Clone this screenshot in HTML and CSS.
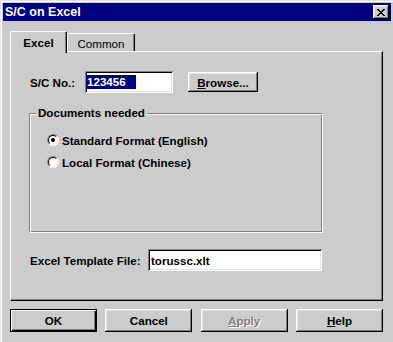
FILE: index.html
```html
<!DOCTYPE html>
<html lang="en">
<head>
    <meta charset="UTF-8">
    <title>S/C on Excel</title>
    <link rel="stylesheet" href="styles.css">
</head>
<body>
    <div class="window">
        <div class="titlebar">
            <span class="title">S/C on Excel</span>
            <button class="close-btn">
                <svg width="8" height="7" viewBox="0 0 8 7" shape-rendering="crispEdges">
                    <path d="M0 0h2v1h-2zM6 0h2v1h-2zM1 1h2v1h-2zM5 1h2v1h-2zM2 2h4v1h-4zM3 3h2v1h-2zM2 4h4v1h-4zM1 5h2v1h-2zM5 5h2v1h-2zM0 6h2v1h-2zM6 6h2v1h-2z" fill="#000"/>
                </svg>
            </button>
        </div>

        <div class="content">
            <div class="tabs">
                <div class="tab active">Excel</div>
                <div class="tab">Common</div>
            </div>

            <div class="tab-panel">
                <div class="sc-row">
                    <label class="sc-label">S/C No.:</label>
                    <div class="textbox sc-input"><span class="selected">123456</span></div>
                    <button class="btn browse-btn"><u>B</u>rowse...</button>
                </div>

                <fieldset class="group">
                    <legend>Documents needed</legend>
                    <div class="radio-row"><span class="radio checked"></span>Standard Format (English)</div>
                    <div class="radio-row"><span class="radio"></span>Local Format (Chinese)</div>
                </fieldset>

                <div class="template-row">
                    <label class="template-label">Excel Template File:</label>
                    <div class="textbox template-input">torussc.xlt</div>
                </div>
            </div>

            <div class="button-row">
                <button class="btn dlg-btn default">OK</button>
                <button class="btn dlg-btn">Cancel</button>
                <button class="btn dlg-btn disabled"><u>A</u>pply</button>
                <button class="btn dlg-btn"><u>H</u>elp</button>
            </div>
        </div>
    </div>
</body>
</html>
```

FILE: styles.css
```css
* {
    margin: 0;
    padding: 0;
    box-sizing: border-box;
    font-family: "Liberation Sans", Arial, sans-serif;
}

body {
    width: 393px;
    height: 342px;
    overflow: hidden;
    background-color: #cccccc;
    font-size: 11.6px;
    font-weight: bold;
    color: #000;
}

.window {
    width: 393px;
    height: 342px;
    padding: 3px 2px 2px 3px;
    background-color: #cccccc;
    box-shadow: inset 1px 1px #e3e3e3, inset 2px 2px #fff;
}

.titlebar {
    height: 18px;
    background-color: #000080;
    color: #fff;
    display: flex;
    align-items: center;
    justify-content: space-between;
    padding: 0 2px 0 2px;
}

.title {
    font-size: 12.5px;
    font-weight: bold;
}

.close-btn {
    width: 16px;
    height: 14px;
    border: none;
    background-color: #cccccc;
    display: flex;
    align-items: center;
    justify-content: center;
    box-shadow: inset -1px -1px #000, inset 1px 1px #fff, inset -2px -2px #808080, inset 2px 2px #e3e3e3;
}

.content {
    padding: 10px 0 0 7px;
}

/* tabs */
.tabs {
    display: flex;
    align-items: flex-end;
    height: 20px;
}

.tab {
    height: 18px;
    width: 68px;
    padding-top: 3px;
    line-height: 14px;
    text-align: center;
    font-weight: normal;
    background-color: #cccccc;
    border-top: 1px solid #fff;
    border-left: 1px solid #fff;
    border-right: 1px solid #000;
    border-radius: 2px 2px 0 0;
    box-shadow: inset -1px 0 #808080;
}

.tab.active {
    width: 57px;
    height: 22px;
    padding-top: 4px;
    margin-bottom: -2px;
    position: relative;
    z-index: 1;
    font-weight: bold;
}

.tab-panel {
    width: 373px;
    height: 250px;
    padding: 19px 0 0 19px;
    border-top: 1px solid #fff;
    border-left: 1px solid #fff;
    border-right: 1px solid #000;
    border-bottom: 1px solid #000;
    box-shadow: inset -1px -1px #808080;
}

/* fields */
.sc-row,
.template-row {
    display: flex;
    align-items: center;
    height: 22px;
}

.sc-label {
    width: 55px;
}

.template-row {
    margin-top: 16px;
}

.template-label {
    width: 118px;
}

.textbox {
    height: 22px;
    background-color: #fff;
    display: flex;
    align-items: center;
    padding: 0 2px 0 3px;
    box-shadow: inset 1px 1px #808080, inset -1px -1px #fff, inset 2px 2px #000, inset -2px -2px #e3e3e3;
}

.sc-input {
    width: 88px;
    margin-right: 15px;
    padding-left: 1px;
}

.template-input {
    width: 174px;
}

.selected {
    background-color: #000080;
    color: #fff;
    line-height: 14px;
    padding: 0 10px 0 1px;
}

/* buttons */
.btn {
    border: none;
    background-color: #cccccc;
    font-size: 11.6px;
    font-weight: bold;
    color: #000;
    box-shadow: inset -1px -1px #000, inset 1px 1px #fff, inset -2px -2px #808080, inset 2px 2px #e3e3e3;
}

.browse-btn {
    width: 70px;
    height: 20px;
}

.button-row {
    width: 373px;
    margin-top: 8px;
    display: flex;
    justify-content: space-between;
}

.dlg-btn {
    width: 87px;
    height: 23px;
}

.dlg-btn.default {
    box-shadow: inset 0 0 0 1px #000, inset 2px 2px #fff, inset -2px -2px #000, inset -3px -3px #808080;
}

.dlg-btn.disabled {
    color: #808080;
    text-shadow: 1px 1px #fff;
}

/* group box */
.group {
    width: 294px;
    height: 127px;
    margin: 13px 0 0 -1px;
    padding: 12px 0 0 0;
    border: 1px solid;
    border-color: #808080 #fff #fff #808080;
    box-shadow: inset 1px 1px #fff, inset -1px -1px #808080;
}

.group legend {
    margin-left: 6px;
    padding: 0 2px;
    line-height: 14px;
    background-color: #cccccc;
}

.radio-row {
    display: flex;
    align-items: center;
    height: 16px;
    margin-left: 17px;
    margin-bottom: 6px;
}

.radio {
    width: 12px;
    height: 12px;
    margin-right: 3px;
    border-radius: 50%;
    border: 1px solid;
    border-color: #808080 #fff #fff #808080;
    background-color: #fff;
    position: relative;
}

.radio::before {
    content: "";
    position: absolute;
    inset: 0;
    border-radius: 50%;
    border: 1px solid;
    border-color: #000 #e3e3e3 #e3e3e3 #000;
}

.radio.checked::after {
    content: "";
    position: absolute;
    left: 3px;
    top: 3px;
    width: 4px;
    height: 4px;
    border-radius: 50%;
    background-color: #000;
}
```
